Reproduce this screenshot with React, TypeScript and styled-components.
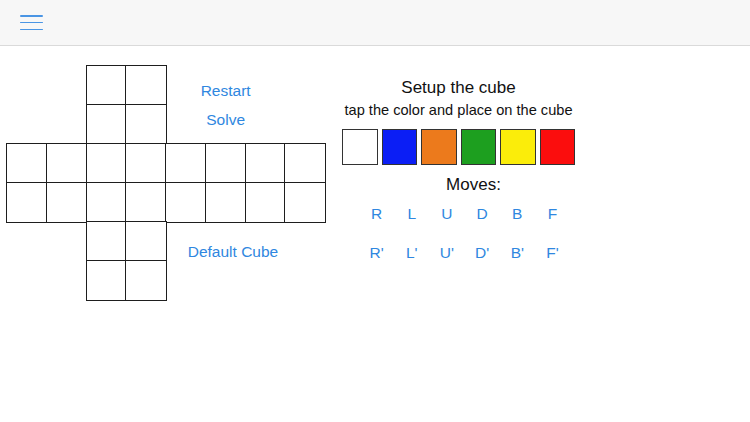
import styled, { createGlobalStyle } from "styled-components";

const GlobalStyle = createGlobalStyle`
  html, body {
    margin: 0;
    padding: 0;
    background: #ffffff;
    font-family: "Liberation Sans", Arial, sans-serif;
  }
`;

const Page = styled.div`
  width: 750px;
  height: 422px;
  overflow: hidden;
  background: #ffffff;
`;

const TopBar = styled.header`
  height: 45px;
  background: #f7f7f7;
  border-bottom: 1px solid #dadada;
  display: flex;
  align-items: center;
  padding-left: 20px;
`;

const MenuButton = styled.button`
  border: none;
  background: none;
  padding: 0;
  width: 23px;
  height: 15px;
  display: flex;
  flex-direction: column;
  justify-content: space-between;
  span {
    display: block;
    height: 1.5px;
    background: #4a95e4;
    border-radius: 1px;
  }
`;

const Main = styled.main`
  display: flex;
  padding: 20px 0 0 7px;
`;

const Net = styled.div`
  display: grid;
  grid-template-columns: repeat(8, 39.75px);
  grid-template-rows: repeat(6, 39px);
`;

const Cell = styled.div<{ $row: number; $col: number }>`
  grid-row: ${(p) => p.$row};
  grid-column: ${(p) => p.$col};
  outline: 1.6px solid #1e1e1e;
  outline-offset: -0.8px;
  background: #ffffff;
`;

const ActionStack = styled.div`
  grid-row: 1 / 3;
  grid-column: 5 / 8;
  display: flex;
  flex-direction: column;
  align-items: center;
  justify-content: center;
  gap: 11px;
`;

const DefaultSlot = styled.div`
  grid-row: 5 / 7;
  grid-column: 5 / 9;
  display: flex;
  justify-content: center;
  align-items: flex-start;
  padding: 21px 25px 0 0;
`;

const LinkButton = styled.button`
  border: none;
  background: none;
  padding: 0;
  font-family: "Liberation Sans", Arial, sans-serif;
  font-size: 15.5px;
  line-height: 18px;
  color: #2f87e0;
  cursor: pointer;
`;

const Setup = styled.section`
  margin-left: 17px;
  width: 233px;
  padding-top: 12px;
  display: flex;
  flex-direction: column;
  align-items: center;
`;

const Title = styled.div`
  font-size: 17px;
  line-height: 20px;
  color: #111;
`;

const Subtitle = styled.div`
  font-size: 14.6px;
  line-height: 17px;
  margin-top: 4px;
  color: #111;
  white-space: nowrap;
`;

const Palette = styled.div`
  display: flex;
  gap: 4px;
  margin-top: 10px;
`;

const Swatch = styled.div<{ $color: string }>`
  width: 35.5px;
  height: 35.5px;
  box-sizing: border-box;
  border: 1.5px solid #333;
  background: ${(p) => p.$color};
`;

const MovesLabel = styled(Title)`
  margin-top: 10px;
  margin-left: 30px;
`;

const MoveGrid = styled.div`
  display: grid;
  grid-template-columns: repeat(6, 35.2px);
  grid-template-rows: repeat(2, 39px);
  margin-left: 12px;
`;

const MoveButton = styled(LinkButton)`
  display: flex;
  align-items: center;
  justify-content: center;
`;

const topFace = [
  [1, 3], [1, 4], [2, 3], [2, 4],
];
const bottomFace = [
  [5, 3], [5, 4], [6, 3], [6, 4],
];
const belt = [3, 4].flatMap((r) =>
  [1, 2, 3, 4, 5, 6, 7, 8].map((c) => [r, c])
);
const cells = [...topFace, ...belt, ...bottomFace];

const colors = ["#ffffff", "#0b1ef5", "#ec7a1c", "#1d9f1f", "#fbed0a", "#fb0d0d"];
const moves = ["R", "L", "U", "D", "B", "F"];

const App = () => {
  return (
    <Page>
      <GlobalStyle />
      <TopBar>
        <MenuButton aria-label="menu">
          <span />
          <span />
          <span />
        </MenuButton>
      </TopBar>
      <Main>
        <Net>
          {cells.map(([r, c]) => (
            <Cell key={`${r}-${c}`} $row={r} $col={c} />
          ))}
          <ActionStack>
            <LinkButton>Restart</LinkButton>
            <LinkButton>Solve</LinkButton>
          </ActionStack>
          <DefaultSlot>
            <LinkButton>Default Cube</LinkButton>
          </DefaultSlot>
        </Net>
        <Setup>
          <Title>Setup the cube</Title>
          <Subtitle>tap the color and place on the cube</Subtitle>
          <Palette>
            {colors.map((c) => (
              <Swatch key={c} $color={c} />
            ))}
          </Palette>
          <MovesLabel>Moves:</MovesLabel>
          <MoveGrid>
            {moves.map((m) => (
              <MoveButton key={m}>{m}</MoveButton>
            ))}
            {moves.map((m) => (
              <MoveButton key={m + "'"}>{m}'</MoveButton>
            ))}
          </MoveGrid>
        </Setup>
      </Main>
    </Page>
  );
};

export default App;
